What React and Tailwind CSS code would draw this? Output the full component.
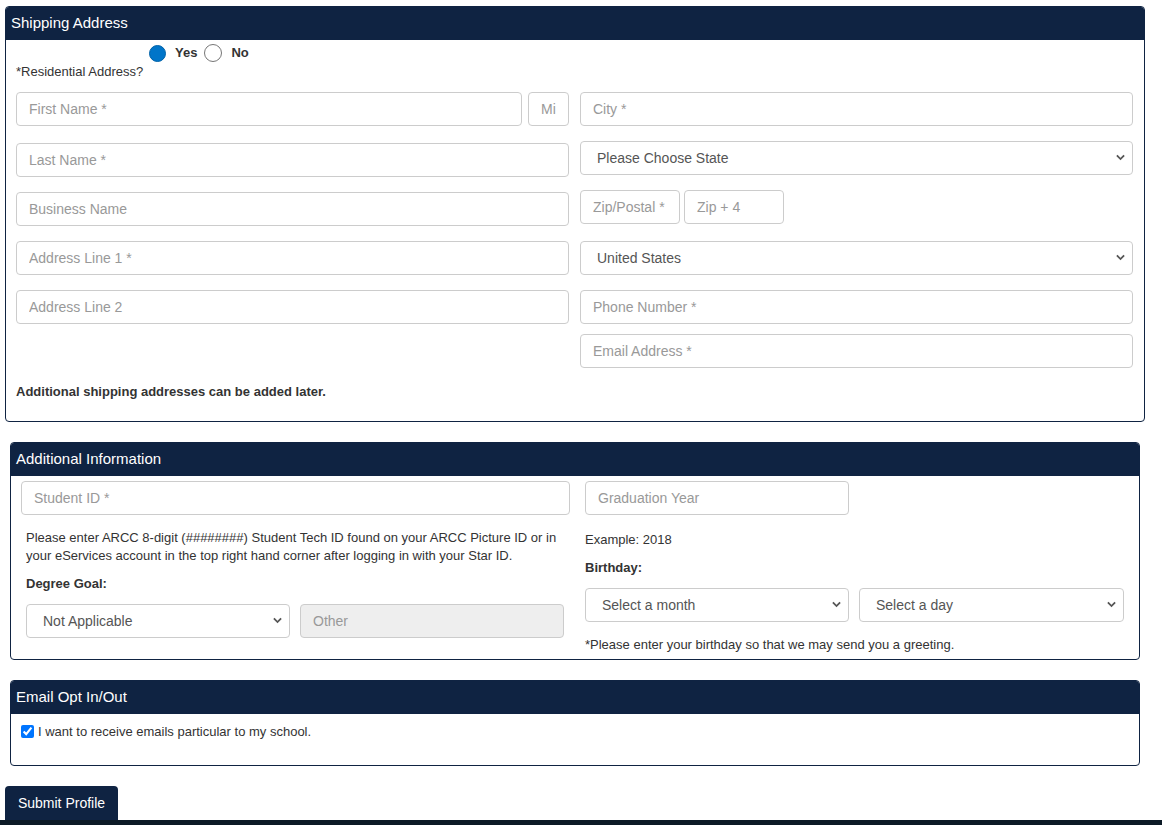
import React from 'react';

const font = { fontFamily: '"Liberation Sans", Arial, sans-serif' };

function Field({ placeholder, className = '', disabled = false }) {
  return (
    <input
      type="text"
      placeholder={placeholder}
      disabled={disabled}
      className={`h-[34px] box-border border border-[#ccc] rounded-[4px] px-[12px] text-[14px] text-[#555] placeholder:text-[#999] outline-none ${disabled ? 'bg-[#eee]' : 'bg-white'} ${className}`}
    />
  );
}

function Select({ value, className = '' }) {
  return (
    <div className={`relative h-[34px] ${className}`}>
      <select
        defaultValue={value}
        className="appearance-none w-full h-full box-border border border-[#ccc] rounded-[4px] pl-[16px] pr-[28px] text-[14px] text-[#555] bg-white outline-none"
      >
        <option>{value}</option>
      </select>
      <svg className="absolute right-[8px] top-[13px] w-[9px] h-[7px] pointer-events-none" viewBox="0 0 10 7">
        <path d="M1 1.2 L5 5.2 L9 1.2" fill="none" stroke="#555" strokeWidth="2" />
      </svg>
    </div>
  );
}

function Panel({ title, className = '', children }) {
  return (
    <div className={`border border-[#0f2342] rounded-[4px] overflow-hidden bg-white ${className}`}>
      <div className="h-[33px] bg-[#0f2342] text-white text-[15px] flex items-center px-[5px]">{title}</div>
      {children}
    </div>
  );
}

export default function App() {
  return (
    <div className="bg-white min-h-[825px] text-[#333]" style={font}>
      <div className="pt-[6px]">
        {/* Shipping Address */}
        <Panel title="Shipping Address" className="ml-[5px] w-[1140px]">
          <div className="px-[10px] pb-[20px]">
            <div className="flex items-center h-[18px] mt-[4px] ml-[133px] text-[13px] font-bold text-[#333]">
              <span className="w-[17px] h-[17px] rounded-full bg-[#0075c9] border border-[#0062a8] box-border"></span>
              <span className="ml-[9px]">Yes</span>
              <span className="ml-[7px] w-[18px] h-[18px] rounded-full bg-white border border-[#767676] box-border"></span>
              <span className="ml-[9px]">No</span>
            </div>
            <div className="mt-[2px] h-[16px] leading-[16px] text-[13px] text-[#333]">*Residential Address?</div>

            <div className="grid grid-cols-[553px_553px] gap-x-[11px] mt-[12px]">
              <div className="flex flex-col">
                <div className="flex gap-[6px]">
                  <Field placeholder="First Name *" className="flex-1 min-w-0" />
                  <Field placeholder="Mi" className="w-[41px] px-[12px]" />
                </div>
                <Field placeholder="Last Name *" className="mt-[17px] w-full" />
                <Field placeholder="Business Name" className="mt-[15px] w-full" />
                <Field placeholder="Address Line 1 *" className="mt-[15px] w-full" />
                <Field placeholder="Address Line 2" className="mt-[15px] w-full" />
              </div>
              <div className="flex flex-col">
                <Field placeholder="City *" className="w-full" />
                <Select value="Please Choose State" className="mt-[15px] w-full" />
                <div className="flex gap-[4px] mt-[15px]">
                  <Field placeholder="Zip/Postal *" className="w-[100px]" />
                  <Field placeholder="Zip + 4" className="w-[100px]" />
                </div>
                <Select value="United States" className="mt-[17px] w-full" />
                <Field placeholder="Phone Number *" className="mt-[15px] w-full" />
                <Field placeholder="Email Address *" className="mt-[10px] w-full" />
              </div>
            </div>

            <p className="mt-[15px] text-[13px] leading-[18px] font-bold text-[#333]">
              Additional shipping addresses can be added later.
            </p>
          </div>
        </Panel>

        {/* Additional Information */}
        <Panel title="Additional Information" className="ml-[10px] mt-[20px] w-[1130px]">
          <div className="grid grid-cols-[549px_543px] gap-x-[15px] px-[10px] pt-[5px] pb-[5px]">
            <div className="flex flex-col">
              <Field placeholder="Student ID *" className="w-full" />
              <div className="pl-[5px] pr-[5px]">
                <p className="mt-[14px] text-[13px] leading-[18px] text-[#333]">
                  Please enter ARCC 8-digit (########) Student Tech ID found on your ARCC Picture ID or in your eServices account in the top right hand corner after logging in with your Star ID.
                </p>
                <p className="mt-[10px] text-[13px] leading-[18px] font-bold text-[#333]">Degree Goal:</p>
                <div className="grid grid-cols-[264px_264px] gap-x-[10px] mt-[11px]">
                  <Select value="Not Applicable" className="w-full" />
                  <Field placeholder="Other" disabled className="w-full" />
                </div>
              </div>
            </div>
            <div className="flex flex-col">
              <Field placeholder="Graduation Year" className="w-[264px]" />
              <p className="mt-[16px] text-[13px] leading-[18px] text-[#333]">Example: 2018</p>
              <p className="mt-[10px] text-[13px] leading-[18px] font-bold text-[#333]">Birthday:</p>
              <div className="grid grid-cols-[264px_265px] gap-x-[10px] mt-[11px]">
                <Select value="Select a month" className="w-full" />
                <Select value="Select a day" className="w-full" />
              </div>
              <p className="mt-[14px] text-[13px] leading-[18px] text-[#333]">
                *Please enter your birthday so that we may send you a greeting.
              </p>
            </div>
          </div>
        </Panel>

        {/* Email Opt In/Out */}
        <Panel title="Email Opt In/Out" className="ml-[10px] mt-[20px] w-[1130px]">
          <div className="h-[51px] px-[10px] pt-[8px]">
            <label className="flex items-center text-[13px] text-[#333]">
              <input type="checkbox" defaultChecked className="w-[13px] h-[13px] m-0" />
              <span className="ml-[4px]">I want to receive emails particular to my school.</span>
            </label>
          </div>
        </Panel>

        <button className="ml-[5px] mt-[20px] w-[113px] h-[34px] bg-[#0f2342] text-white text-[14px] rounded-t-[4px] flex items-center justify-center">
          Submit Profile
        </button>
        <div className="h-[20px] bg-[#0c1a26]"></div>
      </div>
    </div>
  );
}
